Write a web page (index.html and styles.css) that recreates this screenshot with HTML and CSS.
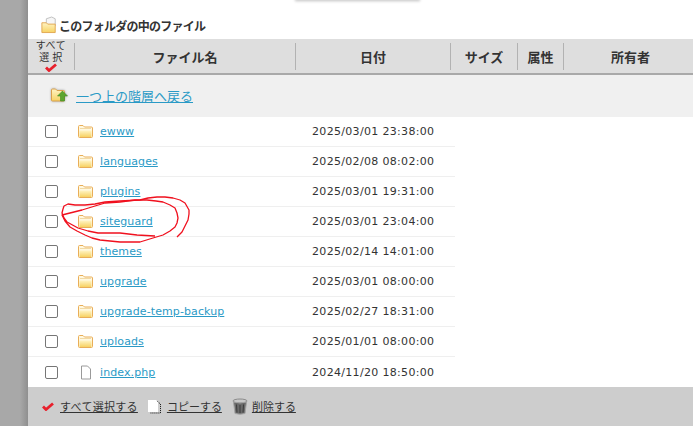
FILE: index.html
```html
<!DOCTYPE html>
<html lang="ja">
<head>
<meta charset="utf-8">
<title>ファイル</title>
<link rel="stylesheet" href="styles.css">
</head>
<body>
<svg width="0" height="0" class="defs">
  <defs>
    <linearGradient id="fg" x1="0" y1="0" x2="0" y2="1"><stop offset="0" stop-color="#fff4c4"/><stop offset="1" stop-color="#f7d263"/></linearGradient>
    <symbol id="folder" viewBox="0 0 15 13">
      <path d="M.5 11.500V1.500q0-1 1-1h3.500l1.500 1.500h7q1 0 1 1v8.500q0 1-1 1h-12q-1 0-1-1z" fill="#fff8e0" stroke="#e9ae58"/>
      <path d="M1.500 5.500h12v6.500h-12z" fill="url(#fg)"/>
      <path d="M2 3.500h11" stroke="#f1d9a4" stroke-width="1"/>
    </symbol>
    <symbol id="check" viewBox="0 0 12 9">
      <path d="M1 4.500l3 3L11 1.500" fill="none" stroke="#e8202c" stroke-width="2.800"/>
    </symbol>
  </defs>
</svg>
<div class="shell">
  <aside class="rail"></aside>
  <main class="panel">
    <div class="topshadow"></div>
    <h2 class="title">
      <svg class="title-icon" viewBox="0 0 18 20" width="16" height="18">
        <path d="M6 9V3l6-2 4 2v8z" fill="#f6f6f6" stroke="#bbb"/>
        <path d="M1 7.500h5l1.500 1.500h8.500v9.500H1z" fill="url(#fg)" stroke="#dfa24a"/>
      </svg>
      このフォルダの中のファイル
    </h2>
    <div class="thead">
      <div class="th th-all"><span class="all-label">すべて<br>選 択</span><svg width="12" height="9"><use href="#check"/></svg></div>
      <div class="th th-name">ファイル名</div>
      <div class="th th-date">日付</div>
      <div class="th th-size">サイズ</div>
      <div class="th th-attr">属性</div>
      <div class="th th-owner">所有者</div>
    </div>
    <div class="uprow">
      <svg class="up-icon" viewBox="0 0 17 14" width="17" height="14">
        <path d="M.5 12V2q0-1 1-1h3l1.500 1.500h6.500q1 0 1 1V12q0 1-1 1h-11q-1 0-1-1z" fill="url(#fg)" stroke="#d9a14c"/>
        <path d="M11.500 3l5 5h-3v5h-4V8h-3z" fill="#5da52f" stroke="#3f8a22" stroke-width=".6"/>
      </svg>
      <a href="#" class="link up-link">一つ上の階層へ戻る</a>
    </div>
    <div class="rows">
      <div class="row"><span class="box"></span><svg class="ficon" width="15" height="13"><use href="#folder"/></svg><span class="name"><a href="#" class="link">ewww</a></span><span class="date">2025/03/01 23:38:00</span></div>
      <div class="row"><span class="box"></span><svg class="ficon" width="15" height="13"><use href="#folder"/></svg><span class="name"><a href="#" class="link">languages</a></span><span class="date">2025/02/08 08:02:00</span></div>
      <div class="row"><span class="box"></span><svg class="ficon" width="15" height="13"><use href="#folder"/></svg><span class="name"><a href="#" class="link">plugins</a></span><span class="date">2025/03/01 19:31:00</span></div>
      <div class="row"><span class="box"></span><svg class="ficon" width="15" height="13"><use href="#folder"/></svg><span class="name"><a href="#" class="link">siteguard</a></span><span class="date">2025/03/01 23:04:00</span></div>
      <div class="row"><span class="box"></span><svg class="ficon" width="15" height="13"><use href="#folder"/></svg><span class="name"><a href="#" class="link">themes</a></span><span class="date">2025/02/14 14:01:00</span></div>
      <div class="row"><span class="box"></span><svg class="ficon" width="15" height="13"><use href="#folder"/></svg><span class="name"><a href="#" class="link">upgrade</a></span><span class="date">2025/03/01 08:00:00</span></div>
      <div class="row"><span class="box"></span><svg class="ficon" width="15" height="13"><use href="#folder"/></svg><span class="name"><a href="#" class="link">upgrade-temp-backup</a></span><span class="date">2025/02/27 18:31:00</span></div>
      <div class="row"><span class="box"></span><svg class="ficon" width="15" height="13"><use href="#folder"/></svg><span class="name"><a href="#" class="link">uploads</a></span><span class="date">2025/01/01 08:00:00</span></div>
      <div class="row row-last"><span class="box"></span><svg class="ficon" width="15" height="15" viewBox="0 0 15 15"><path d="M3.500 1h6l3 3v10h-9z" fill="#fff" stroke="#9a9a9a"/></svg><span class="name"><a href="#" class="link">index.php</a></span><span class="date">2024/11/20 18:50:00</span></div>
    </div>
    <div class="actions">
      <span class="action action-select"><svg width="12" height="9"><use href="#check"/></svg><a href="#" class="act-link">すべて選択する</a></span>
      <span class="action action-copy"><svg width="15" height="15" viewBox="0 0 15 15"><path d="M1 1h8l2 2v10H1z" fill="#fff"/><path d="M10.500 2.500l3 2.500v9h-10" fill="none" stroke="#111" stroke-dasharray="1 1"/></svg><a href="#" class="act-link">コピーする</a></span>
      <span class="action action-trash"><svg width="16" height="17" viewBox="0 0 16 17"><ellipse cx="8" cy="3" rx="7" ry="2" fill="#c8c8c8" stroke="#8a8a8a"/><path d="M1.500 4l1.500 11.500q5 1.500 10 0L14.500 4q-6.500 2-13 0z" fill="#6a6a6a" stroke="#a5a5a5"/><path d="M4.500 6.500l.5 8M8 7v8M11.500 6.500l-.5 8" stroke="#3a3a3a"/></svg><a href="#" class="act-link">削除する</a></span>
    </div>
  </main>
</div>
<svg class="scribble" viewBox="55 190 140 60" width="140" height="60">
  <path d="M177 237L182 232L185 226L188 220L189 214L189 210L185 203L180 200L173 198L165 197L157 197L148 198L140 200L120 201L105 202L95 204L85 205L75 205L68 204L64 206L63 209L62 213L64 218L67 222L78 228L88 231L98 233L120 233L137 235L155 236"/>
  <path d="M120 202L135 200L147 200L156 201L163 202L170 205L175 208L177 213L178 218L177 223L175 227L170 231L163 235L153 238L140 242L130 242L120 242L110 241L100 240L92 238L85 235L77 231L70 227L65 221L62 215L70 213L82 210L95 206L105 203L120 202"/>
</svg>
</body>
</html>
```

FILE: styles.css
```css
* { box-sizing: border-box; }
html, body { margin: 0; height: 426px; overflow: hidden; background: #fff; }
body {
  position: relative;
  font-family: "DejaVu Sans", "Noto Sans CJK JP", sans-serif;
  font-size: 11px;
  color: #333;
}
.defs { position: absolute; }
.shell { display: flex; height: 426px; }
.rail {
  width: 28px;
  flex: none;
  background: linear-gradient(to right, #a8a8a8 0, #a8a8a8 20px, #8f8f8f 28px);
}
.panel { flex: 1; display: flex; flex-direction: column; min-width: 0; position: relative; }
.topshadow {
  position: absolute;
  left: 267px;
  top: -2px;
  width: 125px;
  height: 2px;
  box-shadow: 0 1px 3px rgba(0, 0, 0, .3);
}
.title {
  margin: 0;
  height: 39px;
  padding: 13px 0 0 13px;
  display: flex;
  align-items: center;
  gap: 2px;
  font-family: "Noto Sans CJK JP", sans-serif;
  font-size: 12px;
  letter-spacing: -.75px;
  font-weight: 700;
  line-height: 20px;
  color: #333;
}
.title-icon { flex: none; margin-top: -2px; }
.thead {
  height: 36px;
  flex: none;
  display: flex;
  background: #dedede;
  border-bottom: 2px solid #a9a9a9;
  padding: 4px 0 3px;
}
.th {
  display: flex;
  align-items: center;
  justify-content: center;
  font-family: "Noto Sans CJK JP", sans-serif;
  font-size: 13px;
  font-weight: 700;
  color: #333;
  border-left: 1px solid #b2b2b2;
  line-height: 1;
}
.th-all {
  width: 46px;
  border-left: 0;
  flex-direction: column;
  justify-content: flex-start;
  font-size: 10px;
  font-weight: 400;
  text-align: center;
  margin-top: -4px;
}
.all-label { display: block; line-height: 12px; letter-spacing: .5px; }
.th-name { width: 221px; }
.th-date { width: 155px; }
.th-size { width: 67px; }
.th-attr { width: 46px; }
.th-owner { flex: 1; padding-left: 4px; }
.th-all svg { display: block; margin-top: 0; flex: none; }
.uprow {
  height: 42px;
  flex: none;
  background: #f0f0f0;
  display: flex;
  align-items: center;
  padding: 0 0 2px 23px;
  gap: 8px;
}
.up-icon { flex: none; filter: drop-shadow(0 0 1px rgba(0, 0, 0, .3)); }
.link { color: #2a9ac6; text-decoration: underline; }
.up-link { font-family: "Noto Sans CJK JP", sans-serif; font-size: 13px; }
.rows { flex: 1; display: flex; flex-direction: column; }
.row {
  height: 30px;
  width: 427px;
  flex: none;
  display: flex;
  align-items: center;
  border-bottom: 1px solid #efefef;
  padding-left: 17px;
}
.row-last { border-bottom: 0; }
.box {
  width: 13px;
  height: 13px;
  flex: none;
  background: #fff;
  border: 1px solid #767676;
  border-radius: 2px;
  margin-right: 20px;
}
.ficon { flex: none; margin-right: 7px; }
.name { width: 212px; flex: none; letter-spacing: .1px; }
.date { letter-spacing: .32px; white-space: nowrap; }
.actions {
  height: 39px;
  flex: none;
  background: #cdcdcd;
  display: flex;
  align-items: center;
  padding: 0 0 1px 14px;
  font-family: "Noto Sans CJK JP", sans-serif;
  font-size: 11px;
}
.action { display: flex; align-items: center; gap: 6px; }
.action-select .act-link { letter-spacing: .3px; }
.action-copy { margin-left: 9px; gap: 5px; }
.action-trash { margin-left: 10px; gap: 4px; }
.act-link { color: #333; text-decoration: underline; }
.scribble {
  position: absolute;
  left: 55px;
  top: 190px;
  pointer-events: none;
  fill: none;
  stroke: #f0101e;
  stroke-width: 1.300;
  stroke-linejoin: round;
}
```
